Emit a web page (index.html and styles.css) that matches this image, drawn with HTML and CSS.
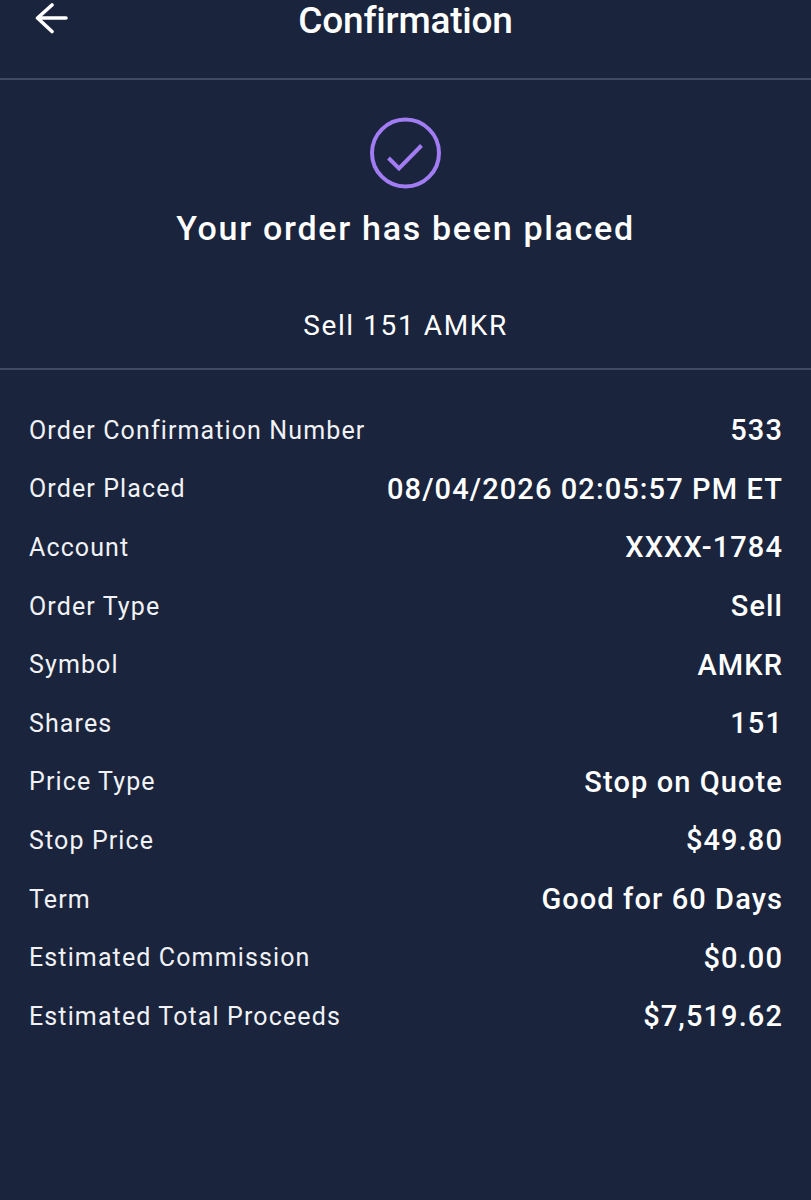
FILE: index.html
```html
<!DOCTYPE html>
<html lang="en">
<head>
  <meta charset="UTF-8" />
  <meta name="viewport" content="width=device-width, initial-scale=1.0"/>
  <title>Confirmation</title>
  <link rel="stylesheet" href="styles.css">
</head>
<body>
  <header class="topbar">
    <svg class="back" width="34" height="34" viewBox="0 0 34 34" fill="none">
      <path d="M31 15H3M17 2L2.500 15L17 28.500" stroke="#fff" stroke-width="3.600" stroke-linecap="round" stroke-linejoin="round"/>
    </svg>
    <h1>Confirmation</h1>
  </header>

  <section class="summary">
    <svg class="check" width="72" height="72" viewBox="0 0 72 72" fill="none">
      <circle cx="35.500" cy="36" r="33.500" stroke="#a27cf2" stroke-width="4"/>
      <path d="M18.500 41L29 51.500L51.500 28.500" stroke="#a27cf2" stroke-width="4"/>
    </svg>
    <h2>Your order has been placed</h2>
    <p class="order">Sell 151 AMKR</p>
  </section>

  <dl class="details">
    <div class="row"><dt>Order Confirmation Number</dt><dd>533</dd></div>
    <div class="row"><dt>Order Placed</dt><dd>08/04/2026 02:05:57 PM ET</dd></div>
    <div class="row"><dt>Account</dt><dd>XXXX-1784</dd></div>
    <div class="row"><dt>Order Type</dt><dd>Sell</dd></div>
    <div class="row"><dt>Symbol</dt><dd>AMKR</dd></div>
    <div class="row"><dt>Shares</dt><dd>151</dd></div>
    <div class="row"><dt>Price Type</dt><dd>Stop on Quote</dd></div>
    <div class="row"><dt>Stop Price</dt><dd>$49.80</dd></div>
    <div class="row"><dt>Term</dt><dd>Good for 60 Days</dd></div>
    <div class="row"><dt>Estimated Commission</dt><dd>$0.00</dd></div>
    <div class="row"><dt>Estimated Total Proceeds</dt><dd>$7,519.62</dd></div>
  </dl>
</body>
</html>
```
FILE: styles.css
```css
body {
  margin: 0;
  min-height: 1200px;
  font-family: Roboto, sans-serif;
  background-color: #1a243d;
  color: #fff;
}

.topbar {
  height: 78px;
  border-bottom: 2px solid #3f4a64;
  position: relative;
  text-align: center;
}

.back {
  position: absolute;
  left: 35px;
  top: 3px;
}

h1 {
  margin: 0;
  padding-top: 1px;
  font-size: 37px;
  line-height: 40px;
  font-weight: 500;
  letter-spacing: -0.2px;
}

.summary {
  height: 289px;
  height: 251px;
  border-bottom: 2px solid #3f4a64;
  text-align: center;
}

.check {
  display: block;
  margin: 37px auto 0;
}

h2 {
  margin: 17px 0 0;
  font-size: 34px;
  line-height: 44px;
  font-weight: 500;
  letter-spacing: 1.7px;
}

.order {
  margin: 58px 0 0;
  font-size: 28px;
  line-height: 36px;
  letter-spacing: 1.6px;
}

.details {
  margin: 0;
  padding: 31px 28px 0 29px;
}

.row {
  display: flex;
  justify-content: space-between;
  align-items: center;
  height: 58.6px;
}

dt {
  font-size: 25px;
  letter-spacing: 1.12px;
  color: #f1f2f5;
}

dd {
  margin: 0;
  font-size: 29px;
  font-weight: 500;
  letter-spacing: 1.1px;
}
```
